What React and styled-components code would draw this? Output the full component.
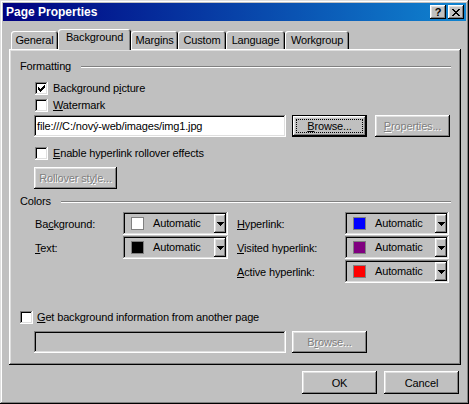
import styled, { createGlobalStyle } from "styled-components";

const GlobalStyle = createGlobalStyle`
  html, body {
    margin: 0;
    padding: 0;
    background: #c0c0c0;
  }
  body {
    font-family: "Liberation Sans", Arial, sans-serif;
    font-size: 11px;
    letter-spacing: -0.15px;
    color: #000;
  }
`;

const raised = `
  box-shadow: inset -1px -1px #000, inset 1px 1px #fff,
    inset -2px -2px #808080, inset 2px 2px #dfdfdf;
`;

const sunken = `
  box-shadow: inset -1px -1px #fff, inset 1px 1px #808080,
    inset -2px -2px #dfdfdf, inset 2px 2px #000;
`;

const Window = styled.div`
  width: 469px;
  height: 404px;
  box-sizing: border-box;
  padding: 3px;
  background: #c0c0c0;
  display: flex;
  flex-direction: column;
  box-shadow: inset -1px -1px #000, inset 1px 1px #dfdfdf,
    inset -2px -2px #808080, inset 2px 2px #fff;
`;

const TitleBar = styled.div`
  height: 18px;
  display: flex;
  align-items: center;
  padding: 0 2px 0 3px;
  background: linear-gradient(to right, #000080, #1084d0);
`;

const TitleText = styled.div`
  flex: 1;
  color: #fff;
  font-weight: bold;
  font-size: 12px;
  letter-spacing: 0;
  line-height: 14px;
`;

const TitleButton = styled.div`
  width: 16px;
  height: 14px;
  box-sizing: border-box;
  background: #c0c0c0;
  display: flex;
  align-items: center;
  justify-content: center;
  margin-left: ${(p) => p.gap || 0}px;
  font-weight: bold;
  font-size: 11px;
  ${raised}
`;

const TabStrip = styled.div`
  margin-top: 8px;
  height: 20px;
  display: flex;
  align-items: flex-end;
  padding-left: 8px;
  position: relative;
  z-index: 1;
`;

const Tab = styled.div`
  width: ${(p) => p.w}px;
  height: ${(p) => (p.active ? 21 : 18)}px;
  margin-bottom: ${(p) => (p.active ? -1 : 0)}px;
  box-sizing: border-box;
  padding-top: ${(p) => (p.active ? 2 : 3)}px;
  text-align: center;
  line-height: 13px;
  background: #c0c0c0;
  border-radius: 3px 3px 0 0;
  box-shadow: inset 1px 1px #fff, inset -1px 0 #000, inset -2px 0 #808080;
`;

const Panel = styled.div`
  margin: 0 5px 0 6px;
  height: 316px;
  box-sizing: border-box;
  padding: 11px 10px 0 11px;
  display: flex;
  flex-direction: column;
  ${raised}
`;

const GroupHeader = styled.div`
  display: flex;
  align-items: center;
  gap: 10px;
  height: 13px;
  line-height: 13px;
  margin-top: ${(p) => p.mt || 0}px;
`;

const Etched = styled.div`
  flex: 1;
  height: 0;
  border-top: 1px solid #808080;
  border-bottom: 1px solid #fff;
`;

const CheckRow = styled.div`
  display: flex;
  align-items: center;
  gap: ${(p) => (p.indent ? 5 : 4)}px;
  height: 13px;
  line-height: 13px;
  padding-left: ${(p) => p.indent || 0}px;
  margin-top: ${(p) => p.mt || 0}px;
`;

const Box = styled.div`
  width: 13px;
  height: 13px;
  flex-shrink: 0;
  background: #fff;
  ${sunken}
`;

const U = styled.span`
  text-decoration: underline;
  text-underline-offset: 1px;
`;

const FieldRow = styled.div`
  display: flex;
  align-items: center;
  height: 22px;
  padding-left: 14px;
  margin-top: ${(p) => p.mt || 0}px;
`;

const TextField = styled.div`
  width: 252px;
  height: 22px;
  box-sizing: border-box;
  padding: 0 3px;
  line-height: 22px;
  background: ${(p) => (p.disabled ? "#c0c0c0" : "#fff")};
  white-space: nowrap;
  overflow: hidden;
  ${sunken}
`;

const Button = styled.div`
  width: ${(p) => p.w || 75}px;
  height: ${(p) => p.h || 22}px;
  box-sizing: border-box;
  margin-left: ${(p) => p.ml || 0}px;
  margin-top: ${(p) => p.mt || 0}px;
  display: flex;
  align-items: center;
  justify-content: center;
  background: #c0c0c0;
  position: relative;
  color: ${(p) => (p.disabled ? "#808080" : "#000")};
  text-shadow: ${(p) => (p.disabled ? "1px 1px #fff" : "none")};
  ${(p) =>
    p.isDefault
      ? `box-shadow: inset 0 0 0 1px #000, inset -2px -2px #000, inset 2px 2px #fff, inset -3px -3px #808080, inset 3px 3px #dfdfdf;`
      : raised}
`;

const Focus = styled.div`
  position: absolute;
  inset: 4px;
  border: 1px dotted #000;
`;

const ColorArea = styled.div`
  display: flex;
  padding-left: 15px;
  margin-top: 4px;
`;

const ColorGrid = styled.div`
  display: grid;
  grid-template-columns: ${(p) => p.cols};
  grid-auto-rows: 23px;
  row-gap: 1px;
  margin-left: ${(p) => p.ml || 0}px;
  align-items: center;
`;

const ColorSelect = styled.div`
  height: 23px;
  box-sizing: border-box;
  padding: 2px;
  display: flex;
  align-items: center;
  ${sunken}
`;

const Swatch = styled.div`
  width: 11px;
  height: 11px;
  margin-left: 6px;
  background: ${(p) => p.color};
  border: 1px solid #808080;
`;

const SelectText = styled.div`
  flex: 1;
  padding-left: 9px;
  line-height: 13px;
`;

const ArrowButton = styled.div`
  width: 12px;
  height: 19px;
  box-sizing: border-box;
  display: flex;
  align-items: center;
  justify-content: center;
  background: #c0c0c0;
  ${raised}
`;

const ButtonRow = styled.div`
  display: flex;
  justify-content: flex-end;
  gap: 7px;
  margin: 6px 7px 0 0;
`;

const Check = () => (
  <svg width="13" height="13" viewBox="0 0 13 13" shapeRendering="crispEdges">
    {[5, 6, 7, 6, 5, 4, 3].map((y, i) => (
      <rect key={i} x={3 + i} y={y} width="1" height="3" fill="#000" />
    ))}
  </svg>
);

const CheckBox = ({ checked }) => <Box>{checked && <Check />}</Box>;

const Arrow = () => (
  <svg width="7" height="4" viewBox="0 0 7 4" shapeRendering="crispEdges">
    <rect x="0" y="0" width="7" height="1" fill="#000" />
    <rect x="1" y="1" width="5" height="1" fill="#000" />
    <rect x="2" y="2" width="3" height="1" fill="#000" />
    <rect x="3" y="3" width="1" height="1" fill="#000" />
  </svg>
);

const CloseGlyph = () => (
  <svg width="8" height="7" viewBox="0 0 8 7" shapeRendering="crispEdges">
    {[0, 1, 2, 3, 4, 5, 6].map((i) => (
      <g key={i}>
        <rect x={i} y={i} width="2" height="1" fill="#000" />
        <rect x={6 - i} y={i} width="2" height="1" fill="#000" />
      </g>
    ))}
  </svg>
);

const ColorField = ({ color }) => (
  <ColorSelect>
    <Swatch color={color} />
    <SelectText>Automatic</SelectText>
    <ArrowButton>
      <Arrow />
    </ArrowButton>
  </ColorSelect>
);

const tabs = [
  ["General", 47],
  ["Background", 73],
  ["Margins", 47],
  ["Custom", 48],
  ["Language", 59],
  ["Workgroup", 64],
];

export default function App() {
  return (
    <>
      <GlobalStyle />
      <Window>
        <TitleBar>
          <TitleText>Page Properties</TitleText>
          <TitleButton>?</TitleButton>
          <TitleButton gap={2}>
            <CloseGlyph />
          </TitleButton>
        </TitleBar>

        <TabStrip>
          {tabs.map(([name, w]) => (
            <Tab key={name} w={w} active={name === "Background"}>
              {name}
            </Tab>
          ))}
        </TabStrip>

        <Panel>
          <GroupHeader>
            Formatting
            <Etched />
          </GroupHeader>
          <CheckRow indent={15} mt={9}>
            <CheckBox checked />
            <span>
              Background p<U>i</U>cture
            </span>
          </CheckRow>
          <CheckRow indent={15} mt={4}>
            <CheckBox />
            <span>
              <U>W</U>atermark
            </span>
          </CheckRow>
          <FieldRow mt={3}>
            <TextField>file:///C:/nový-web/images/img1.jpg</TextField>
            <Button ml={6} isDefault>
              <Focus />
              <span>
                <U>B</U>rowse...
              </span>
            </Button>
            <Button ml={8} disabled>
              <span>
                <U>P</U>roperties...
              </span>
            </Button>
          </FieldRow>
          <CheckRow indent={15} mt={10}>
            <CheckBox />
            <span>
              <U>E</U>nable hyperlink rollover effects
            </span>
          </CheckRow>
          <FieldRow mt={7}>
            <Button w={83} disabled>
              <span>
                Rollover st<U>y</U>le...
              </span>
            </Button>
          </FieldRow>

          <GroupHeader mt={6}>
            Colors
            <Etched />
          </GroupHeader>
          <ColorArea>
            <ColorGrid cols="88px 105px">
              <span>
                Ba<U>c</U>kground:
              </span>
              <ColorField color="#fff" />
              <span>
                <U>T</U>ext:
              </span>
              <ColorField color="#000" />
            </ColorGrid>
            <ColorGrid cols="108px 104px" ml={9}>
              <span>
                <U>H</U>yperlink:
              </span>
              <ColorField color="#0000ff" />
              <span>
                <U>V</U>isited hyperlink:
              </span>
              <ColorField color="#800080" />
              <span>
                <U>A</U>ctive hyperlink:
              </span>
              <ColorField color="#ff0000" />
            </ColorGrid>
          </ColorArea>

          <CheckRow mt={28}>
            <CheckBox />
            <span>
              <U>G</U>et background information from another page
            </span>
          </CheckRow>
          <FieldRow mt={7}>
            <TextField disabled />
            <Button ml={6} disabled>
              <span>
                B<U>r</U>owse...
              </span>
            </Button>
          </FieldRow>
        </Panel>

        <ButtonRow>
          <Button h={23}>OK</Button>
          <Button h={23}>Cancel</Button>
        </ButtonRow>
      </Window>
    </>
  );
}
